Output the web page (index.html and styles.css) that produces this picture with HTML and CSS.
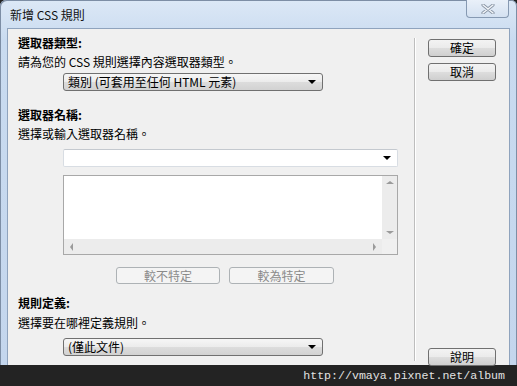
FILE: index.html
```html
<!DOCTYPE html>
<html lang="zh-Hant">
<head>
  <meta charset="UTF-8" />
  <title>新增 CSS 規則</title>
  <link rel="stylesheet" href="styles.css">
</head>
<body>
  <div class="window">
    <div class="titlebar">
      <span class="title">新增 CSS 規則</span>
      <div class="close">
        <svg width="14" height="10" viewBox="0 0 14 10">
          <path d="M2 1 L12 9 M12 1 L2 9" stroke="#8a96a6" stroke-width="3.2" stroke-linecap="round" />
          <path d="M2 1 L12 9 M12 1 L2 9" stroke="#f4f7fb" stroke-width="1.4" stroke-linecap="round" />
        </svg>
      </div>
    </div>

    <div class="client">
      <div class="main">
        <div class="heading">選取器類型:</div>
        <div class="desc">請為您的 CSS 規則選擇內容選取器類型。</div>
        <div class="select first">類別 (可套用至任何 HTML 元素)<span class="arrow"></span></div>

        <div class="heading gap">選取器名稱:</div>
        <div class="desc">選擇或輸入選取器名稱。</div>
        <div class="combo"><span class="arrow"></span></div>

        <div class="listbox">
          <div class="list-area"></div>
          <div class="vscroll">
            <span class="tri up"></span>
            <span class="tri down"></span>
          </div>
          <div class="hscroll">
            <span class="tri left"></span>
            <span class="tri right"></span>
          </div>
          <div class="corner"></div>
        </div>

        <div class="spec-row">
          <button class="btn disabled">較不特定</button>
          <button class="btn disabled wide">較為特定</button>
        </div>

        <div class="heading gap2">規則定義:</div>
        <div class="desc tight">選擇要在哪裡定義規則。</div>
        <div class="select last">(僅此文件)<span class="arrow"></span></div>
      </div>

      <div class="sep"></div>

      <div class="side">
        <button class="btn">確定</button>
        <button class="btn">取消</button>
        <button class="btn help">說明</button>
      </div>
    </div>
  </div>

  <div class="watermark">http://vmaya.pixnet.net/album</div>
</body>
</html>
```

FILE: styles.css
```css
:root {
  --frame: #c7d9ef;
  --face: #f0f0f0;
  --text: #000;
  --btn-border: #707070;
  --disabled: #8a8a8a;
}

* {
  box-sizing: border-box;
}

body {
  margin: 0;
  width: 517px;
  height: 386px;
  overflow: hidden;
  background-color: #232323;
  font-family: "Noto Sans CJK TC", "Noto Sans", sans-serif;
  font-size: 12px;
  color: var(--text);
}

.window {
  height: 365px;
  padding: 0 7px;
  background: linear-gradient(to bottom, #dce8f6, #c9dbf0 40px, #c4d6ed);
  border-radius: 6px 6px 0 0;
  box-shadow: inset 1px 1px 0 #7d8ea5, inset -1px 0 0 #7d8ea5;
  display: flex;
  flex-direction: column;
}

.titlebar {
  height: 28px;
  display: flex;
  align-items: flex-start;
}

.title {
  margin-top: 7px;
  padding-left: 3px;
  line-height: 16px;
  color: #111;
}

.close {
  margin-left: auto;
  margin-right: 1px;
  width: 43px;
  height: 18px;
  border: 1px solid #8699b2;
  border-top: none;
  border-radius: 0 0 4px 4px;
  background: linear-gradient(to bottom, #e9f0f9, #d4e1f1);
  display: flex;
  align-items: center;
  justify-content: center;
}

.client {
  flex: 1;
  background-color: var(--face);
  border: 1px solid #8fa3bd;
  border-bottom: none;
  display: flex;
}

.main {
  width: 406px;
  padding: 6px 0 0 10px;
}

.heading {
  font-weight: bold;
  line-height: 16px;
  margin-bottom: 3px;
}

.heading.gap {
  margin-top: 16px;
}

.heading.gap2 {
  margin-top: 11px;
  margin-bottom: 4px;
}

.desc {
  line-height: 16px;
}

.select {
  position: relative;
  margin-left: 45px;
  width: 260px;
  height: 18px;
  padding: 0 4px;
  line-height: 16px;
  border: 1px solid var(--btn-border);
  border-radius: 3px;
  background: linear-gradient(to bottom, #f6f6f6 0%, #ececec 48%, #dcdcdc 52%, #d2d2d2 100%);
}

.select.first {
  margin-top: 3px;
}

.select.last {
  margin-top: 7px;
}

.arrow {
  position: absolute;
  right: 6px;
  top: 6px;
  border-left: 4px solid transparent;
  border-right: 4px solid transparent;
  border-top: 4px solid #000;
}

.combo {
  position: relative;
  margin: 7px 0 0 45px;
  width: 335px;
  height: 18px;
  background: #fff;
  border: 1px solid #d8dde3;
  border-top-color: #c4c9cf;
  border-radius: 2px;
}

.listbox {
  margin: 8px 0 0 45px;
  width: 335px;
  height: 80px;
  border: 1px solid #a8a8a8;
  background: #fff;
  display: grid;
  grid-template-columns: 1fr 15px;
  grid-template-rows: 1fr 15px;
}

.vscroll,
.hscroll {
  position: relative;
  background: #ececec;
}

.corner {
  background: #f0f0f0;
}

.tri {
  position: absolute;
  width: 0;
  height: 0;
}

.tri.up {
  top: 5px;
  left: 4px;
  border-left: 4px solid transparent;
  border-right: 4px solid transparent;
  border-bottom: 3px solid #9a9a9a;
}

.tri.down {
  bottom: 5px;
  left: 4px;
  border-left: 4px solid transparent;
  border-right: 4px solid transparent;
  border-top: 3px solid #9a9a9a;
}

.tri.left {
  left: 6px;
  top: 4px;
  border-top: 4px solid transparent;
  border-bottom: 4px solid transparent;
  border-right: 3px solid #9a9a9a;
}

.tri.right {
  right: 6px;
  top: 4px;
  border-top: 4px solid transparent;
  border-bottom: 4px solid transparent;
  border-left: 3px solid #9a9a9a;
}

.spec-row {
  display: flex;
  gap: 9px;
  margin: 12px 0 0 98px;
}

.btn {
  width: 68px;
  height: 18px;
  padding: 0;
  font-family: inherit;
  font-size: 12px;
  line-height: 16px;
  color: var(--text);
  border: 1px solid var(--btn-border);
  border-radius: 3px;
  background: linear-gradient(to bottom, #f3f3f3 0%, #ebebeb 48%, #dddddd 52%, #cfcfcf 100%);
}

.btn.disabled {
  width: 104px;
  height: 17px;
  color: var(--disabled);
  border-color: #adb2b5;
  background: #f4f4f4;
}

.btn.wide {
  width: 105px;
}

.sep {
  margin: 9px 0 4px;
  width: 2px;
  border-left: 1px solid #bdbdbd;
  border-right: 1px solid #fff;
}

.side {
  padding: 10px 0 0 12px;
  display: flex;
  flex-direction: column;
  gap: 6px;
}

.btn.help {
  margin-top: auto;
  margin-bottom: -1px;
}

.watermark {
  height: 21px;
  padding-right: 12px;
  text-align: right;
  font-family: "Liberation Mono", monospace;
  font-size: 11.6px;
  line-height: 21px;
  color: #e2e2e2;
}
```
